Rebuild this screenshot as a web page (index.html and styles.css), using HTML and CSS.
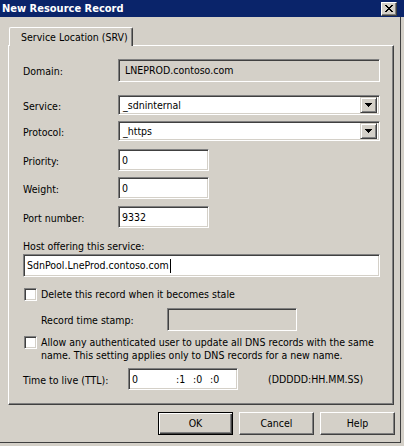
FILE: index.html
```html
<!DOCTYPE html>
<html>
<head>
<meta charset="utf-8">
<title>New Resource Record</title>
<link rel="stylesheet" href="styles.css">
</head>
<body>
<div class="window">
  <div class="titlebar">
    <span class="title">New Resource Record</span>
    <span class="close">
      <svg width="8" height="7" viewBox="0 0 8 7" shape-rendering="crispEdges"><path d="M0 0h2v1h-2zM6 0h2v1h-2zM1 1h2v1h-2zM5 1h2v1h-2zM2 2h4v1h-4zM3 3h2v1h-2zM2 4h4v1h-4zM1 5h2v1h-2zM5 5h2v1h-2zM0 6h2v1h-2zM6 6h2v1h-2z" fill="#000"/></svg>
    </span>
  </div>
  <div class="client">
    <div class="tabs"><div class="tab">Service Location (SRV)</div></div>
    <div class="panel">
      <div class="row m13">
        <span class="label">Domain:</span>
        <div class="edit readonly wide tall domain">LNEPROD.contoso.com</div>
      </div>
      <div class="row m13">
        <span class="label">Service:</span>
        <div class="combo">
          <span class="combo-text">_sdninternal</span>
          <span class="dropbtn"><svg width="7" height="4" viewBox="0 0 7 4" shape-rendering="crispEdges"><path d="M0 0h7v1h-1v1h-1v1h-1v1h-1v-1h-1v-1h-1v-1h-1z" fill="#000"/></svg></span>
        </div>
      </div>
      <div class="row m6">
        <span class="label">Protocol:</span>
        <div class="combo">
          <span class="combo-text">_https</span>
          <span class="dropbtn"><svg width="7" height="4" viewBox="0 0 7 4" shape-rendering="crispEdges"><path d="M0 0h7v1h-1v1h-1v1h-1v1h-1v-1h-1v-1h-1v-1h-1z" fill="#000"/></svg></span>
        </div>
      </div>
      <div class="row m8">
        <span class="label">Priority:</span>
        <div class="edit short">0</div>
      </div>
      <div class="row m6">
        <span class="label">Weight:</span>
        <div class="edit short">0</div>
      </div>
      <div class="row m7">
        <span class="label">Port number:</span>
        <div class="edit short">9332</div>
      </div>
      <div class="caption m12">Host offering this service:</div>
      <div class="edit host tall m1">SdnPool.LneProd.contoso.com<span class="caret"></span></div>
      <div class="row m11 check-row">
        <span class="check"></span>
        <span class="check-text">Delete this record when it becomes stale</span>
      </div>
      <div class="row m7 indent">
        <span class="label ts-label">Record time stamp:</span>
        <div class="edit readonly ts tall"></div>
      </div>
      <div class="row m5 check-row top">
        <span class="check"></span>
        <span class="check-text multi">Allow any authenticated user to update all DNS records with the same<br>name. This setting applies only to DNS records for a new name.</span>
      </div>
      <div class="row m6">
        <span class="label ttl-label">Time to live (TTL):</span>
        <div class="edit ttl"><span class="ttl-d">0</span><span class="ttl-p">:1</span><span class="ttl-p">:0</span><span class="ttl-p">:0</span></div>
        <span class="ttl-format">(DDDDD:HH.MM.SS)</span>
      </div>
    </div>
    <div class="buttons">
      <div class="btn default">OK</div>
      <div class="btn">Cancel</div>
      <div class="btn">Help</div>
    </div>
  </div>
</div>
</body>
</html>
```
FILE: styles.css
```css
* { box-sizing: border-box; }
html, body { margin: 0; padding: 0; }
body {
  width: 404px;
  height: 446px;
  overflow: hidden;
  background: #d4d0c8;
  font-family: "DejaVu Sans Condensed", "DejaVu Sans", sans-serif;
  font-size: 10.5px;
  line-height: 13px;
  color: #000;
}
.window { width: 404px; height: 446px; display: flex; flex-direction: column; }
.titlebar {
  height: 17px;
  flex: none;
  background: #0a246a;
  display: flex;
  align-items: center;
  justify-content: space-between;
  padding: 0 7px 0 2px;
}
.title { color: #fff; font-weight: bold; font-size: 11px; line-height: 13px; }
.close {
  width: 16px;
  height: 14px;
  background: #d4d0c8;
  border: 1px solid;
  border-color: #fff #404040 #404040 #fff;
  box-shadow: inset -1px -1px 0 #808080;
  display: flex;
  align-items: center;
  justify-content: center;
}
.client {
  width: 401px;
  height: 426px;
  flex: none;
  border-right: 1px solid #404040;
  border-bottom: 1px solid #404040;
  padding: 10px 0 0 8px;
}
.tabs { display: flex; padding-left: 1px; }
.tab {
  position: relative;
  z-index: 1;
  width: 124px;
  height: 19px;
  margin-bottom: -1px;
  background: #d4d0c8;
  border-top: 1px solid #fff;
  border-left: 1px solid #fff;
  border-right: 1px solid #404040;
  border-radius: 2px 2px 0 0;
  box-shadow: inset -1px 0 0 #808080;
  padding-left: 11px;
  display: flex;
  align-items: center;
}
.panel {
  width: 386px;
  height: 360px;
  border: 1px solid;
  border-color: #fff #404040 #404040 #fff;
  box-shadow: inset -1px -1px 0 #808080;
  padding-left: 14px;
  display: flex;
  flex-direction: column;
}
.m1 { margin-top: 1px; }
.m5 { margin-top: 5px; }
.m6 { margin-top: 6px; }
.m7 { margin-top: 7px; }
.m8 { margin-top: 8px; }
.m11 { margin-top: 11px; }
.m12 { margin-top: 12px; }
.m13 { margin-top: 13px; }
.row { display: flex; align-items: center; }
.row.top { align-items: flex-start; }
.label { width: 95px; flex: none; padding-top: 2px; }
.edit {
  height: 22px;
  flex: none;
  background: #fff;
  border: 1px solid;
  border-color: #808080 #fff #fff #808080;
  box-shadow: inset 1px 1px 0 #404040, inset -1px -1px 0 #d4d0c8;
  padding: 0 2px;
  display: flex;
  align-items: center;
  white-space: nowrap;
}
.edit.tall { height: 23px; }
.readonly { background: #d4d0c8; }
.wide { width: 262px; }
.domain { padding-left: 6px; }
.short { width: 91px; padding-left: 3px; }
.host { width: 357px; padding-left: 3px; }
.caret { width: 1px; height: 14px; background: #000; margin-left: 1px; }
.combo {
  width: 262px;
  height: 20px;
  flex: none;
  background: #fff;
  border: 1px solid;
  border-color: #808080 #fff #fff #808080;
  box-shadow: inset 1px 1px 0 #404040, inset -1px -1px 0 #d4d0c8;
  padding: 1px;
  display: flex;
  align-items: center;
  justify-content: space-between;
}
.combo-text { padding-left: 3px; }
.dropbtn {
  width: 17px;
  height: 16px;
  margin-right: 1px;
  background: #d4d0c8;
  border: 1px solid;
  border-color: #d4d0c8 #404040 #404040 #d4d0c8;
  box-shadow: inset 1px 1px 0 #fff, inset -1px -1px 0 #808080;
  display: flex;
  align-items: center;
  justify-content: center;
}
.check {
  width: 13px;
  height: 13px;
  flex: none;
  margin-left: 1px;
  background: #fff;
  border: 1px solid;
  border-color: #808080 #fff #fff #808080;
  box-shadow: inset 1px 1px 0 #404040, inset -1px -1px 0 #d4d0c8;
}
.check-text { margin-left: 4px; }
.check-text.multi { margin-top: 0; }
.indent { padding-left: 18px; }
.ts-label { width: 126px; }
.ts { width: 130px; }
.ttl-label { width: 105px; }
.ttl { width: 110px; padding-left: 3px; }
.ttl-d { width: 44px; }
.ttl-p { width: 17px; }
.ttl-format { margin-left: 30px; padding-top: 1px; }
.buttons {
  display: flex;
  justify-content: flex-end;
  gap: 6px;
  width: 387px;
  margin-top: 7px;
}
.btn {
  width: 75px;
  height: 23px;
  border: 1px solid;
  border-color: #fff #404040 #404040 #fff;
  box-shadow: inset -1px -1px 0 #808080;
  display: flex;
  align-items: center;
  justify-content: center;
}
.btn.default {
  border: 1px solid #000;
  box-shadow: inset 1px 1px 0 #fff, inset -1px -1px 0 #404040, inset -2px -2px 0 #808080;
}
```
